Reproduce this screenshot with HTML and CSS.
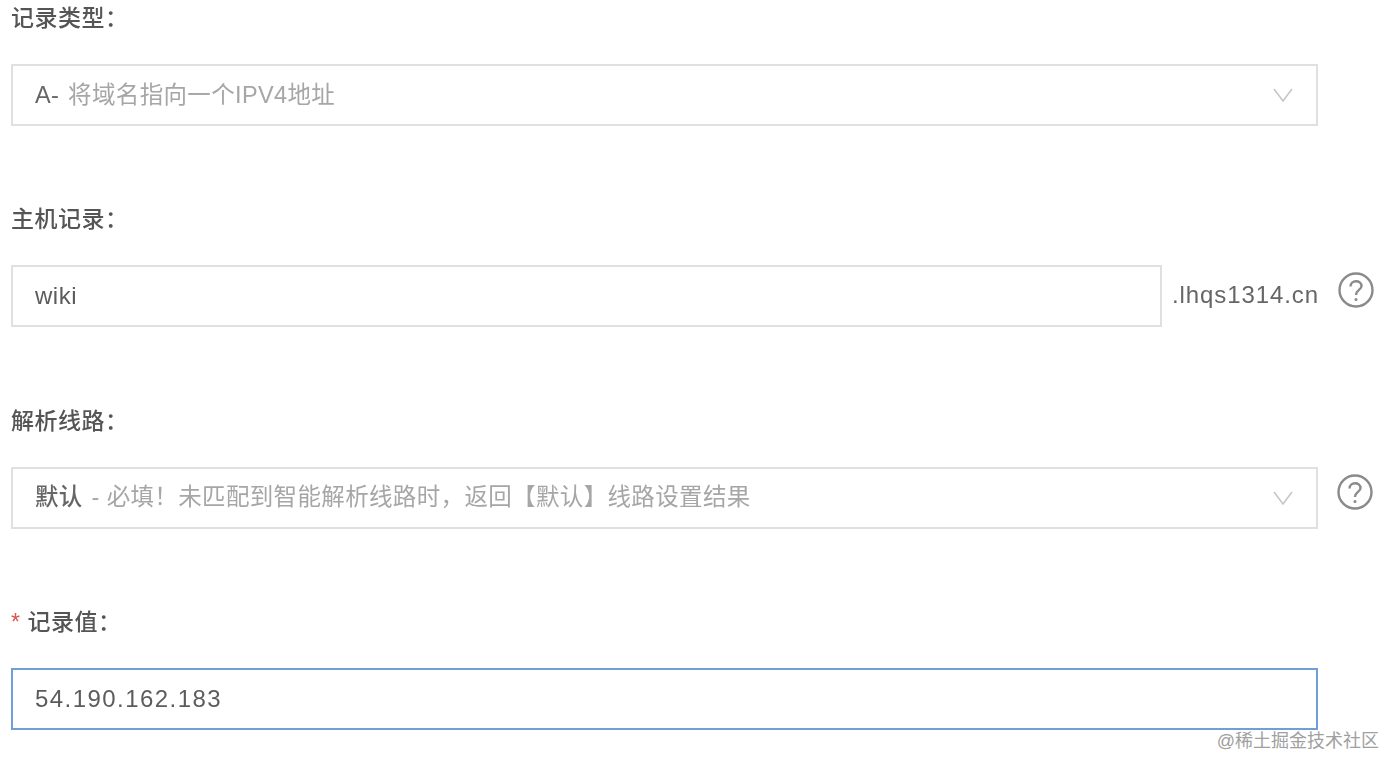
FILE: index.html
```html
<!DOCTYPE html>
<html>
<head>
    <meta charset="utf-8">
    <title>添加记录</title>
    <link rel="stylesheet" href="styles.css">
</head>
<body>
    <form class="record-form">
        <div class="form-group">
            <label class="field-label">记录类型：</label>
            <div class="field-row">
                <div class="select-box">
                    <span class="select-text"><b>A-</b> 将域名指向一个IPV4地址</span>
                    <svg class="chevron" viewBox="0 0 20 14"><path d="M1 1 L10 13 L19 1"/></svg>
                </div>
            </div>
        </div>

        <div class="form-group">
            <label class="field-label">主机记录：</label>
            <div class="field-row">
                <input class="text-input host-input" type="text" value="wiki">
                <span class="suffix">.lhqs1314.cn</span>
                <svg class="help-icon" viewBox="0 0 36 36">
                    <circle cx="18" cy="18" r="16.5"/>
                    <path d="M12.5 14.5 C12.5 7.5 23.5 7.5 23.5 14 C23.5 18 18 18 18 23"/>
                    <circle class="help-dot" cx="18" cy="27.5" r="1.5"/>
                </svg>
            </div>
        </div>

        <div class="form-group">
            <label class="field-label">解析线路：</label>
            <div class="field-row">
                <div class="select-box">
                    <span class="select-text"><b>默认</b> - 必填！未匹配到智能解析线路时，返回【默认】线路设置结果</span>
                    <svg class="chevron" viewBox="0 0 20 14"><path d="M1 1 L10 13 L19 1"/></svg>
                </div>
                <svg class="help-icon" viewBox="0 0 36 36">
                    <circle cx="18" cy="18" r="16.5"/>
                    <path d="M12.5 14.5 C12.5 7.5 23.5 7.5 23.5 14 C23.5 18 18 18 18 23"/>
                    <circle class="help-dot" cx="18" cy="27.5" r="1.5"/>
                </svg>
            </div>
        </div>

        <div class="form-group">
            <label class="field-label"><span class="required">*</span>记录值：</label>
            <div class="field-row">
                <input class="text-input focused" type="text" value="54.190.162.183">
            </div>
        </div>
    </form>
    <div class="watermark">@稀土掘金技术社区</div>
</body>
</html>
```

FILE: styles.css
```css
html, body {
    margin: 0;
    padding: 0;
    height: 100%;
    overflow: hidden;
    background: #fff;
}
body {
    position: relative;
    font-family: "Liberation Sans", "Noto Sans CJK SC", sans-serif;
    font-size: 23px;
    color: #666;
}
.record-form {
    padding-left: 11px;
    filter: blur(0.7px);
}
.form-group { height: 201.3px; }
.field-label {
    display: block;
    height: 38px;
    margin-bottom: 26px;
    line-height: 37px;
    font-size: 23px;
    font-weight: 500;
    letter-spacing: 0.5px;
    color: #555;
}
.required {
    margin-right: 7px;
    color: #d9534f;
}
.field-row {
    display: flex;
    align-items: flex-start;
}
.select-box, .text-input {
    box-sizing: border-box;
    width: 1307px;
    height: 62px;
    border: 2px solid #e0e0e0;
    background: #fff;
}
.select-box {
    display: flex;
    align-items: center;
    justify-content: space-between;
    padding: 0 23px 0 22px;
}
.select-text {
    padding-bottom: 5px;
    font-size: 23.5px;
    letter-spacing: 0.35px;
    color: #a6a6a6;
}
.select-text b {
    margin-right: 2px;
    font-weight: 500;
    color: #666;
}
.chevron {
    width: 20px;
    height: 14px;
    fill: none;
    stroke: #c4c4c4;
    stroke-width: 1.5;
}
.text-input {
    padding: 0 22px;
    font-family: inherit;
    font-size: 24px;
    font-weight: 500;
    letter-spacing: 1.45px;
    color: #5c5c5c;
    outline: none;
}
.host-input {
    width: 1151px;
    letter-spacing: 0.5px;
}
.focused { border-color: #6f9fd8; }
.suffix {
    width: 147px;
    margin-left: 10px;
    line-height: 60px;
    font-size: 24px;
    letter-spacing: 0.9px;
    white-space: nowrap;
}
.help-icon {
    width: 36px;
    height: 36px;
    margin: 7px 0 0 19px;
    fill: none;
    stroke: #8a8a8a;
    stroke-width: 2.4;
}
.help-icon .help-dot {
    fill: #8a8a8a;
    stroke: none;
}
.watermark {
    position: absolute;
    right: 21px;
    top: 728px;
    font-size: 18px;
    line-height: 26px;
    color: #a0a0a0;
}
```
